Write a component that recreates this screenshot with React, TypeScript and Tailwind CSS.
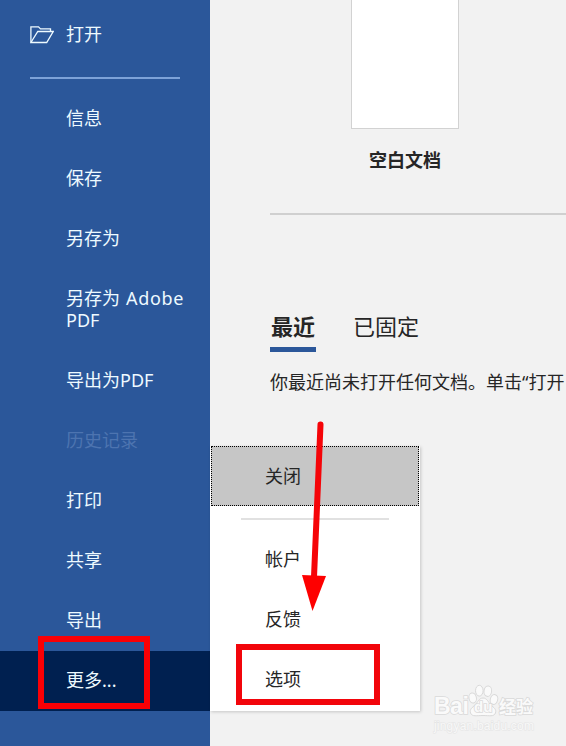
import React from 'react';
import clsx from 'clsx';

interface NavItem {
  label: string;
  disabled?: boolean;
  active?: boolean;
}

const navItems: NavItem[] = [
  { label: '信息' },
  { label: '保存' },
  { label: '另存为' },
  { label: '另存为 Adobe PDF' },
  { label: '导出为PDF' },
  { label: '历史记录', disabled: true },
  { label: '打印' },
  { label: '共享' },
  { label: '导出' },
  { label: '更多...', active: true },
];

const menuItems = ['帐户', '反馈', '选项'];

function FolderIcon() {
  return (
    <svg className="w-6 h-[18px]" viewBox="0 0 24 18" fill="none" stroke="currentColor" strokeWidth="1.3">
      <path d="M0.9 16.5V0.9H8.5L10.5 2.9H20.5V5.5" />
      <path d="M0.9 16.5L7.8 5.5H23.2L16.7 16.5Z" />
    </svg>
  );
}

function NavLabel({ label }: { label: string }) {
  // Labels with spaces break before the last word
  const [first, second, third] = label.split(' ');
  if (!second) return <span>{first}</span>;
  return (
    <div>
      <div className="flex gap-1.5">
        <span>{first}</span>
        <span className="tracking-[0.7px]">{second}</span>
      </div>
      <div>{third}</div>
    </div>
  );
}

function Sidebar() {
  return (
    <nav className="w-[210px] shrink-0 bg-[#2b579a] text-[#eefaff] pt-[5px]">
      <div className="flex items-center h-[60px] pl-[30px] gap-3">
        <FolderIcon />
        <span className="pb-0.5">打开</span>
      </div>
      <div className="mt-3 mb-[10px] ml-[30px] w-[150px] h-0.5 bg-[#7da2d8]" />
      {navItems.map((item) => (
        <div
          key={item.label}
          className={clsx(
            'flex items-center pl-[66px] pb-0.5',
            item.label.includes(' ') ? 'h-[82px]' : 'h-[60px]',
            item.active && 'bg-[#002050]',
            item.disabled && 'text-[#4d74b0]'
          )}
        >
          <NavLabel label={item.label} />
        </div>
      ))}
    </nav>
  );
}

function MoreMenu() {
  return (
    <div className="absolute left-[210px] top-[446px] w-[210px] h-[265px] bg-white shadow-[1px_1px_3px_rgba(0,0,0,0.18)]">
      <div className="ml-px w-[208px] h-[60px] flex items-center pl-[53px] bg-[#c6c6c6] border border-dotted border-black">
        关闭
      </div>
      <div className="ml-[31px] mt-3 mb-[9px] w-[148px] h-0.5 bg-[#e1e1e1]" />
      {menuItems.map((label) => (
        <div key={label} className="h-[60px] flex items-center pl-[55px]">
          {label}
        </div>
      ))}
    </div>
  );
}

function Watermark() {
  return (
    <div className="absolute left-[434px] top-[684px] w-[104px] text-[#fafafa]">
      <div className="flex items-end h-[34px] [paint-order:stroke] [-webkit-text-stroke:1.6px_#dadada]">
        <span className="w-[34px] text-[23px] leading-[24px] font-bold font-['Liberation_Sans'] tracking-[-0.5px]">Bai</span>
        <div className="relative w-[31px] h-[34px]">
          <svg className="w-[31px] h-[34px] [paint-order:normal]" viewBox="0 0 31 34" fill="#fafafa" stroke="#d9d9d9" strokeWidth="1">
            <path d="M15 14C11 14 10 18 7 21C4 24 1.5 25 2.5 29C4 33 9 31.5 15 31.5C21 31.5 26 33 27.5 29C28.500 25 26 24 23 21C20 18 19 14 15 14Z" />
            <ellipse cx="4.7" cy="14" rx="3.7" ry="5" transform="rotate(-12 4.7 14)" />
            <ellipse cx="11.3" cy="6.7" rx="3.8" ry="5.4" />
            <ellipse cx="19.8" cy="7.2" rx="3.8" ry="5.2" transform="rotate(8 19.8 7.2)" />
            <ellipse cx="26" cy="15.5" rx="3.7" ry="5" transform="rotate(15 26 15.5)" />
          </svg>
          <span className="absolute left-[6px] top-[15px] text-[15px] leading-4 font-bold font-['Liberation_Sans']">du</span>
        </div>
        <span className="text-[17px] leading-[23px] font-bold">经验</span>
      </div>
      <div className="mt-px text-[12px] leading-[14px] font-['Liberation_Sans'] tracking-[0.2px] text-[#f8f8f8] [paint-order:stroke] [-webkit-text-stroke:1.2px_#e5e5e5]">
        jingyan.baidu.com
      </div>
    </div>
  );
}

// Red boxes and arrow that point out the steps
function Annotations() {
  return (
    <>
      <div className="absolute left-[38px] top-[636px] w-[112px] h-[73px] border-6 border-[#fa0005]" />
      <div className="absolute left-[236px] top-[644px] w-[144px] h-[61px] border-6 border-[#f2050b]" />
      <svg className="absolute left-[300px] top-[420px] w-[30px] h-[194px]" viewBox="0 0 30 194">
        <path d="M20.5 4.5L14 157" stroke="#f50408" strokeWidth="6" strokeLinecap="round" />
        <path d="M2 155L26 156L12.5 191Z" fill="#fe0000" />
      </svg>
    </>
  );
}

export default function App() {
  return (
    <div className="relative flex w-[566px] h-[746px] overflow-hidden bg-[#f2f2f2] text-[#262626] text-[18px] leading-[22px] font-['Noto_Sans','Noto_Sans_CJK_SC',sans-serif]">
      <Sidebar />

      <main className="flex-1 min-w-0 pl-[60px]">
        <div className="w-[270px] flex flex-col items-center">
          <div className="w-[108px] h-[129px] bg-white border border-t-0 border-[#d2d2d2]" />
          <div className="mt-5 font-bold">空白文档</div>
        </div>
        <div className="mt-[42px] h-0.5 bg-[#d0d0d0]" />

        <div className="mt-[96px] flex gap-[37px] text-[22px] leading-[30px]">
          <div className="w-[46px] h-[41px] border-b-5 border-[#2b579a] font-bold text-center">最近</div>
          <div>已固定</div>
        </div>
        <p className="mt-[19px] whitespace-nowrap">你最近尚未打开任何文档。单击“打开</p>
      </main>

      <MoreMenu />
      <Watermark />
      <Annotations />
    </div>
  );
}
